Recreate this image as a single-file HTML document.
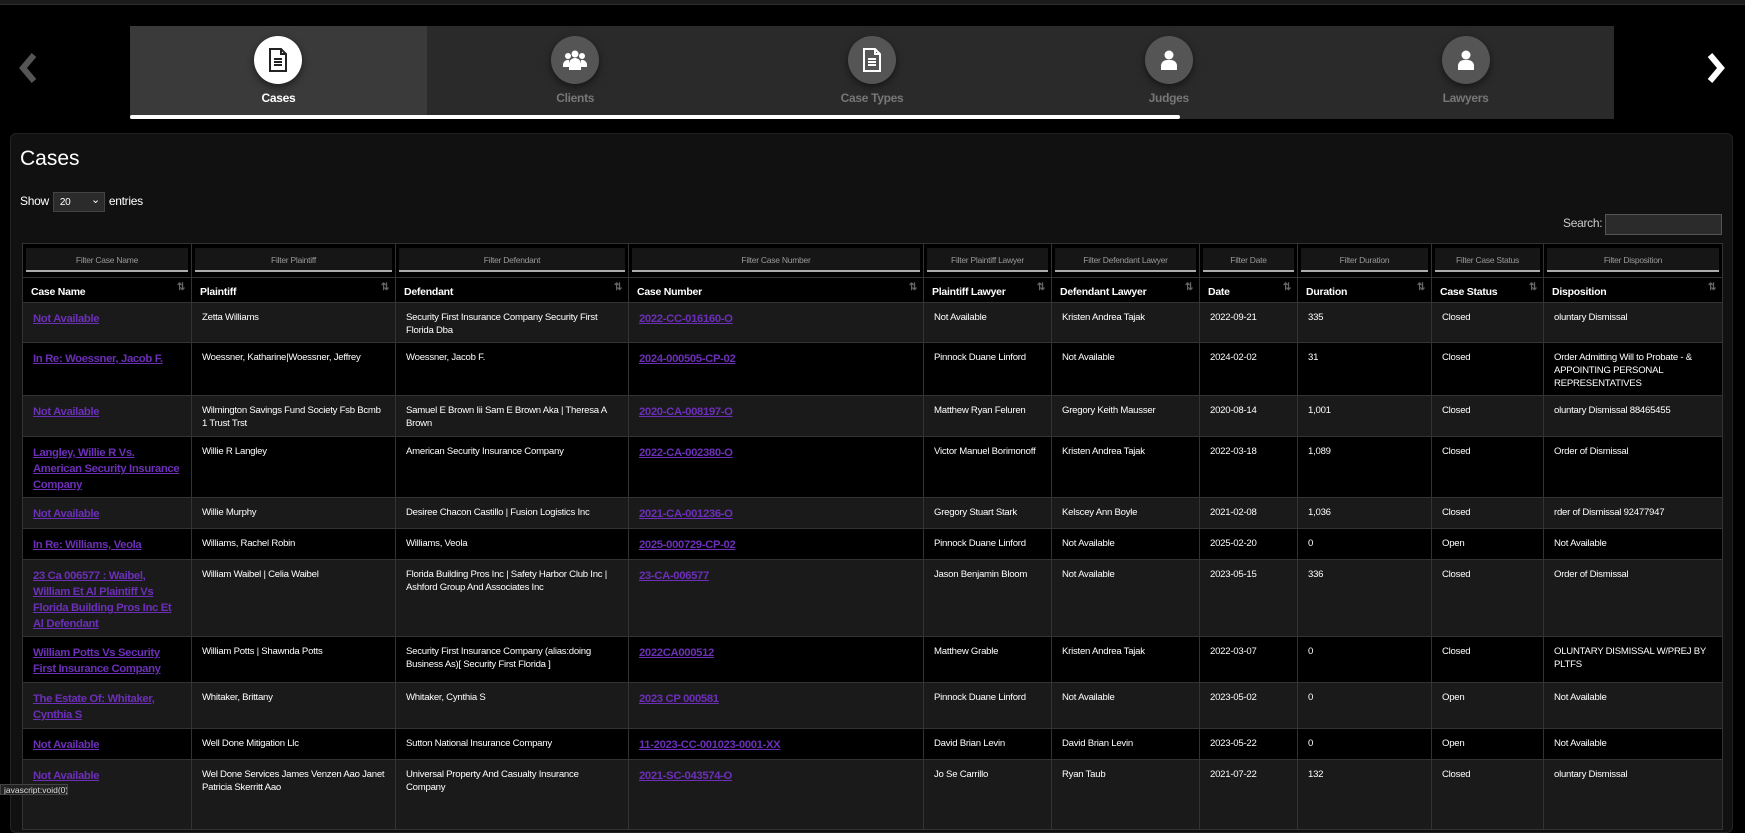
<!DOCTYPE html>
<html><head><meta charset="utf-8">
<style>
*{box-sizing:border-box;margin:0;padding:0}
html,body{width:1745px;height:795px;overflow:hidden;background:#000;font-family:"Liberation Sans",sans-serif;color:#fff}
.topbar{position:absolute;left:0;top:0;width:1745px;height:5px;background:#1b1b1b;border-bottom:1px solid #2e2e2e}
.tabs{position:absolute;left:130px;top:26px;width:1484px;height:93px;background:#2a2a2a;display:flex}
.tab{width:296.8px;height:93px;position:relative;text-align:center}
.tab.active{background:#3a3a3a}
.circ{position:absolute;left:50%;top:10px;width:48px;height:48px;margin-left:-24px;border-radius:50%;background:#555;box-shadow:0 3px 8px rgba(0,0,0,.5);display:flex;align-items:center;justify-content:center}
.tab.active .circ{background:#fff}
.lbl{position:absolute;left:0;right:0;top:65px;font-size:12px;font-weight:bold;color:#777;letter-spacing:-0.3px}
.tab.active .lbl{color:#fff}
.prog{position:absolute;left:130px;top:115px;width:1050px;height:4px;background:#fff;border-radius:2px}
.panel{position:absolute;left:10px;top:133px;width:1723px;height:700px;background:#111;border:1px solid #222;border-radius:6px}
h1{position:absolute;left:20px;top:147px;font-size:21px;font-weight:normal}
.show{position:absolute;left:20px;top:192px;font-size:12px;letter-spacing:-0.3px}
.sel{display:inline-block;width:52px;height:20px;background:#2b2b2b;border:1px solid #444;vertical-align:middle;font-size:10px;padding:4px 0 0 6px;position:relative;margin:0 1px}
.sel:after{content:"⌄";position:absolute;right:4px;top:0;font-size:11px}
.search{position:absolute;left:1563px;top:216px;font-size:12px;color:#ccc;letter-spacing:-0.3px}
.sinp{position:absolute;left:1605px;top:214px;width:117px;height:21px;background:#2b2b2b;border:1px solid #555}
table{position:absolute;left:22px;top:243px;width:1700px;border-collapse:collapse;table-layout:fixed;font-size:9.6px;letter-spacing:-0.25px}
td,th{border:1px solid #333;vertical-align:top;text-align:left}
tr.f td{background:#000;height:34px;padding:4px 3px}
.fi{height:24px;background:#161616;border-bottom:2px solid #aaa;color:#999;font-size:8.5px;text-align:center;padding-top:7px}
th{background:#000;height:25px;padding:8px 8px 0;font-size:10.5px;position:relative}
th:after{content:"⇅";position:absolute;right:6px;top:4px;color:#666;font-size:10px}
td.d{padding:8px 10px 0;line-height:13px;overflow:hidden}
tr.o td.d{background:#1a1a1a}
tr.e td.d{background:#000}
a{color:#6c2fb8;font-weight:bold;font-size:11.3px;text-decoration:underline;line-height:16px;letter-spacing:-0.35px}
.status{position:absolute;left:0;top:784px;height:11px;background:#222;color:#ddd;font-size:8.5px;line-height:10px;padding:0 3px;border:1px solid #444;width:68px;white-space:nowrap;overflow:hidden}
</style></head><body>
<div class="topbar"></div>
<svg style="position:absolute;left:18px;top:52px" width="22" height="32" viewBox="0 0 22 32"><path d="M16 3L5 16l11 13" fill="none" stroke="#555" stroke-width="6"/></svg>
<svg style="position:absolute;left:1704px;top:52px" width="22" height="32" viewBox="0 0 22 32"><path d="M6 3l11 13L6 29" fill="none" stroke="#fff" stroke-width="6"/></svg>
<div class="tabs">
 <div class="tab active"><div class="circ"><svg width="22" height="24" viewBox="0 0 22 24"><path d="M3 1h11l5 5v17H3z" fill="none" stroke="#222" stroke-width="2"/><path d="M14 1v5h5" fill="none" stroke="#222" stroke-width="2"/><path d="M7 11h8M7 14h8M7 17h8" stroke="#222" stroke-width="2"/></svg></div><div class="lbl">Cases</div></div>
 <div class="tab"><div class="circ"><svg width="26" height="22" viewBox="0 0 26 22"><circle cx="13" cy="5" r="3.5" fill="#fff"/><circle cx="6" cy="7" r="3" fill="#fff"/><circle cx="20" cy="7" r="3" fill="#fff"/><path d="M7 21v-6a6 6 0 0 1 12 0v6z" fill="#fff"/><path d="M1 18v-3a5 5 0 0 1 6-4v7zM25 18v-3a5 5 0 0 0-6-4v7z" fill="#fff"/></svg></div><div class="lbl">Clients</div></div>
 <div class="tab"><div class="circ"><svg width="22" height="24" viewBox="0 0 22 24"><path d="M3 1h11l5 5v17H3z" fill="none" stroke="#fff" stroke-width="2"/><path d="M14 1v5h5" fill="none" stroke="#fff" stroke-width="2"/><path d="M7 11h8M7 14h8M7 17h8" stroke="#fff" stroke-width="2"/></svg></div><div class="lbl">Case Types</div></div>
 <div class="tab"><div class="circ"><svg width="18" height="22" viewBox="0 0 18 22"><circle cx="9" cy="6" r="4.5" fill="#fff"/><path d="M1 21v-5a6 6 0 0 1 6-5h4a6 6 0 0 1 6 5v5z" fill="#fff"/></svg></div><div class="lbl">Judges</div></div>
 <div class="tab"><div class="circ"><svg width="18" height="22" viewBox="0 0 18 22"><circle cx="9" cy="6" r="4.5" fill="#fff"/><path d="M1 21v-5a6 6 0 0 1 6-5h4a6 6 0 0 1 6 5v5z" fill="#fff"/></svg></div><div class="lbl">Lawyers</div></div>
</div>
<div class="prog"></div>
<div class="panel"></div>
<h1>Cases</h1>
<div class="show">Show <span class="sel">20</span> entries</div>
<div class="search">Search:</div><div class="sinp"></div>
<table>
<colgroup><col style="width:169px"><col style="width:204px"><col style="width:233px"><col style="width:295px"><col style="width:128px"><col style="width:148px"><col style="width:98px"><col style="width:134px"><col style="width:112px"><col style="width:179px"></colgroup>
<tr class="f"><td><div class="fi">Filter Case Name</div></td><td><div class="fi">Filter Plaintiff</div></td><td><div class="fi">Filter Defendant</div></td><td><div class="fi">Filter Case Number</div></td><td><div class="fi">Filter Plaintiff Lawyer</div></td><td><div class="fi">Filter Defendant Lawyer</div></td><td><div class="fi">Filter Date</div></td><td><div class="fi">Filter Duration</div></td><td><div class="fi">Filter Case Status</div></td><td><div class="fi">Filter Disposition</div></td></tr>
<tr><th>Case Name</th><th>Plaintiff</th><th>Defendant</th><th>Case Number</th><th>Plaintiff Lawyer</th><th>Defendant Lawyer</th><th>Date</th><th>Duration</th><th>Case Status</th><th>Disposition</th></tr>
<tr class="o" style="height:40px"><td class="d"><a>Not Available</a></td><td class="d">Zetta Williams</td><td class="d">Security First Insurance Company Security First Florida Dba</td><td class="d"><a>2022-CC-016160-O</a></td><td class="d">Not Available</td><td class="d">Kristen Andrea Tajak</td><td class="d">2022-09-21</td><td class="d">335</td><td class="d">Closed</td><td class="d">oluntary Dismissal</td></tr>
<tr class="e" style="height:53px"><td class="d"><a>In Re: Woessner, Jacob F.</a></td><td class="d">Woessner, Katharine|Woessner, Jeffrey</td><td class="d">Woessner, Jacob F.</td><td class="d"><a>2024-000505-CP-02</a></td><td class="d">Pinnock Duane Linford</td><td class="d">Not Available</td><td class="d">2024-02-02</td><td class="d">31</td><td class="d">Closed</td><td class="d">Order Admitting Will to Probate - &amp; APPOINTING PERSONAL REPRESENTATIVES</td></tr>
<tr class="o" style="height:41px"><td class="d"><a>Not Available</a></td><td class="d">Wilmington Savings Fund Society Fsb Bcmb 1 Trust Trst</td><td class="d">Samuel E Brown Iii Sam E Brown Aka | Theresa A Brown</td><td class="d"><a>2020-CA-008197-O</a></td><td class="d">Matthew Ryan Feluren</td><td class="d">Gregory Keith Mausser</td><td class="d">2020-08-14</td><td class="d">1,001</td><td class="d">Closed</td><td class="d">oluntary Dismissal 88465455</td></tr>
<tr class="e" style="height:61px"><td class="d"><a>Langley, Willie R Vs. American Security Insurance Company</a></td><td class="d">Willie R Langley</td><td class="d">American Security Insurance Company</td><td class="d"><a>2022-CA-002380-O</a></td><td class="d">Victor Manuel Borimonoff</td><td class="d">Kristen Andrea Tajak</td><td class="d">2022-03-18</td><td class="d">1,089</td><td class="d">Closed</td><td class="d">Order of Dismissal</td></tr>
<tr class="o" style="height:31px"><td class="d"><a>Not Available</a></td><td class="d">Willie Murphy</td><td class="d">Desiree Chacon Castillo | Fusion Logistics Inc</td><td class="d"><a>2021-CA-001236-O</a></td><td class="d">Gregory Stuart Stark</td><td class="d">Kelscey Ann Boyle</td><td class="d">2021-02-08</td><td class="d">1,036</td><td class="d">Closed</td><td class="d">rder of Dismissal 92477947</td></tr>
<tr class="e" style="height:31px"><td class="d"><a>In Re: Williams, Veola</a></td><td class="d">Williams, Rachel Robin</td><td class="d">Williams, Veola</td><td class="d"><a>2025-000729-CP-02</a></td><td class="d">Pinnock Duane Linford</td><td class="d">Not Available</td><td class="d">2025-02-20</td><td class="d">0</td><td class="d">Open</td><td class="d">Not Available</td></tr>
<tr class="o" style="height:77px"><td class="d"><a>23 Ca 006577 : Waibel, William Et Al Plaintiff Vs Florida Building Pros Inc Et Al Defendant</a></td><td class="d">William Waibel | Celia Waibel</td><td class="d">Florida Building Pros Inc | Safety Harbor Club Inc | Ashford Group And Associates Inc</td><td class="d"><a>23-CA-006577</a></td><td class="d">Jason Benjamin Bloom</td><td class="d">Not Available</td><td class="d">2023-05-15</td><td class="d">336</td><td class="d">Closed</td><td class="d">Order of Dismissal</td></tr>
<tr class="e" style="height:46px"><td class="d"><a>William Potts Vs Security First Insurance Company</a></td><td class="d">William Potts | Shawnda Potts</td><td class="d">Security First Insurance Company (alias:doing Business As)[ Security First Florida ]</td><td class="d"><a>2022CA000512</a></td><td class="d">Matthew Grable</td><td class="d">Kristen Andrea Tajak</td><td class="d">2022-03-07</td><td class="d">0</td><td class="d">Closed</td><td class="d">OLUNTARY DISMISSAL W/PREJ BY PLTFS</td></tr>
<tr class="o" style="height:46px"><td class="d"><a>The Estate Of: Whitaker, Cynthia S</a></td><td class="d">Whitaker, Brittany</td><td class="d">Whitaker, Cynthia S</td><td class="d"><a>2023 CP 000581</a></td><td class="d">Pinnock Duane Linford</td><td class="d">Not Available</td><td class="d">2023-05-02</td><td class="d">0</td><td class="d">Open</td><td class="d">Not Available</td></tr>
<tr class="e" style="height:31px"><td class="d"><a>Not Available</a></td><td class="d">Well Done Mitigation Llc</td><td class="d">Sutton National Insurance Company</td><td class="d"><a>11-2023-CC-001023-0001-XX</a></td><td class="d">David Brian Levin</td><td class="d">David Brian Levin</td><td class="d">2023-05-22</td><td class="d">0</td><td class="d">Open</td><td class="d">Not Available</td></tr>
<tr class="o" style="height:70px"><td class="d"><a>Not Available</a></td><td class="d">Wel Done Services James Venzen Aao Janet Patricia Skerritt Aao</td><td class="d">Universal Property And Casualty Insurance Company</td><td class="d"><a>2021-SC-043574-O</a></td><td class="d">Jo Se Carrillo</td><td class="d">Ryan Taub</td><td class="d">2021-07-22</td><td class="d">132</td><td class="d">Closed</td><td class="d">oluntary Dismissal</td></tr>
</table>
<div class="status">javascript:void(0)</div>
</body></html>
